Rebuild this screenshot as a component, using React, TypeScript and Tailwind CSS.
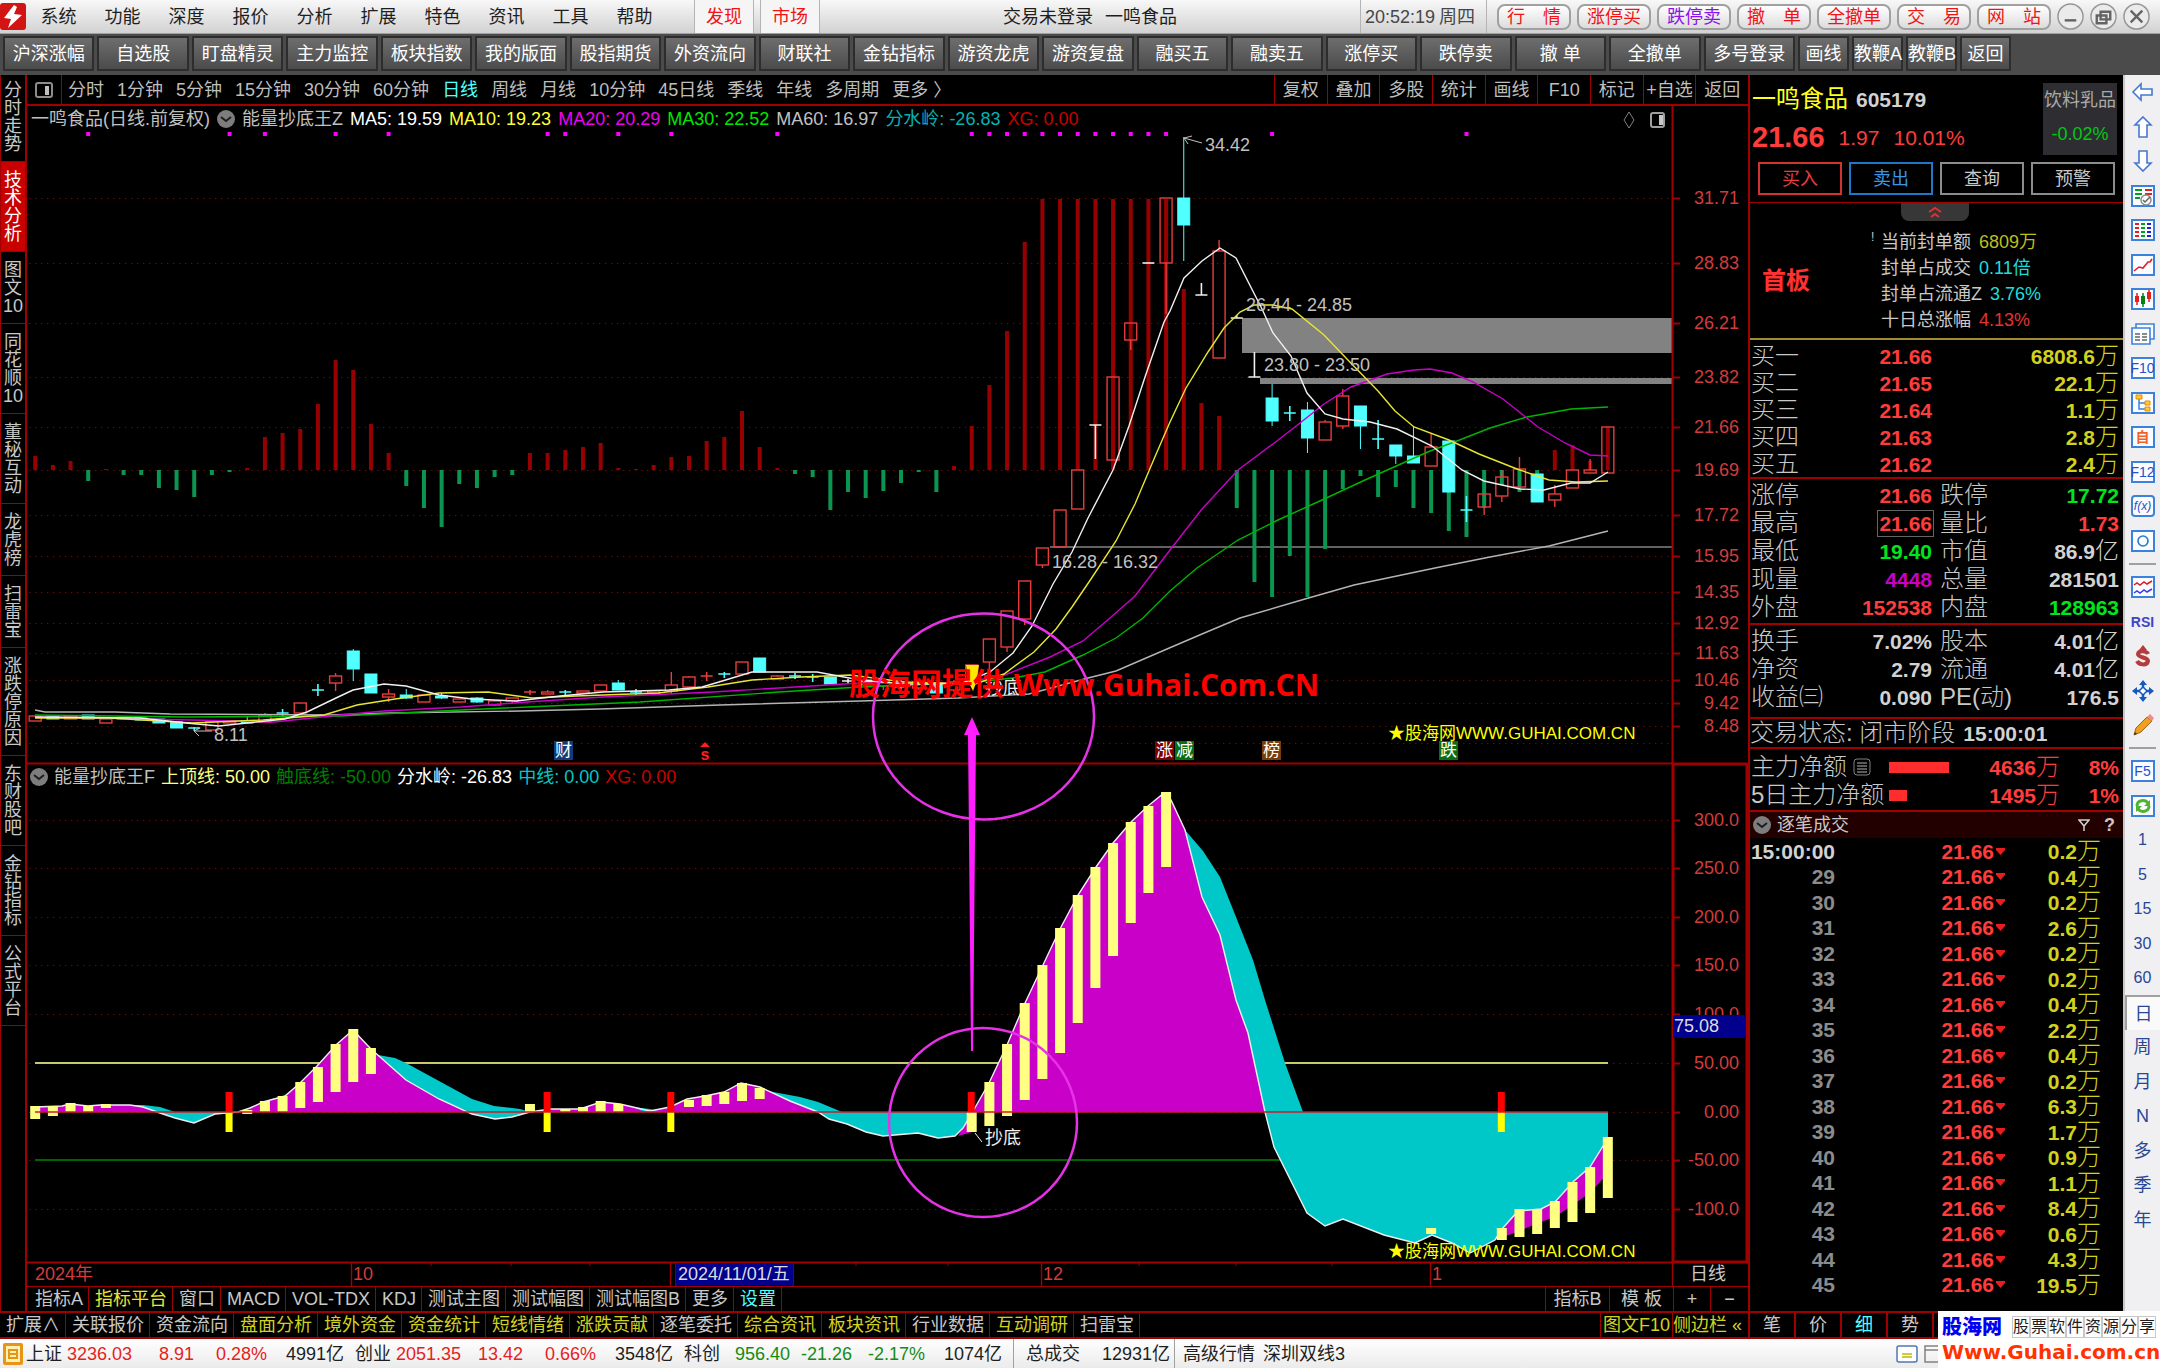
import type { ReactNode } from "react";
import clsx from "clsx";

const MENU = ["系统", "功能", "深度", "报价", "分析", "扩展", "特色", "资讯", "工具", "帮助"];

const PILLS: ReadonlyArray<{ label: string; violet?: boolean }> = [
  { label: "行　情" },
  { label: "涨停买" },
  { label: "跌停卖", violet: true },
  { label: "撤　单" },
  { label: "全撤单" },
  { label: "交　易" },
  { label: "网　站" },
];

const SHORTCUTS = [
  "沪深涨幅", "自选股", "盯盘精灵", "主力监控", "板块指数", "我的版面", "股指期货",
  "外资流向", "财联社", "金钻指标", "游资龙虎", "游资复盘", "融买五", "融卖五",
  "涨停买", "跌停卖", "撤 单", "全撤单", "多号登录",
];
const SHORTCUTS_SMALL = ["画线", "教鞭A", "教鞭B", "返回"];

const SIDE = [
  "分时走势", "技术分析", "图文10", "同花顺10", "董秘互动", "龙虎榜",
  "扫雷宝", "涨跌停原因", "东财股吧", "金钻指标", "公式平台",
];

const PERIODS = [
  "分时", "1分钟", "5分钟", "15分钟", "30分钟", "60分钟", "日线", "周线", "月线",
  "10分钟", "45日线", "季线", "年线", "多周期", "更多 〉",
];
const CHART_TOOLS = ["复权", "叠加", "多股", "统计", "画线", "F10", "标记", "+自选", "返回"];

const INDICATOR_TABS = [
  "指标A", "指标平台", "窗口", "MACD", "VOL-TDX", "KDJ", "测试主图", "测试幅图", "测试幅图B", "更多", "设置",
];

const BOTTOM_TABS: ReadonlyArray<[string, boolean]> = [
  ["扩展∧", false],
  ["关联报价", false],
  ["资金流向", false],
  ["盘面分析", true],
  ["境外资金", true],
  ["资金统计", true],
  ["短线情绪", true],
  ["涨跌贡献", true],
  ["逐笔委托", false],
  ["综合资讯", true],
  ["板块资讯", true],
  ["行业数据", false],
  ["互动调研", true],
  ["扫雷宝", false],
];

const INDEXES = [
  { name: "上证", price: "3236.03", change: "8.91", pct: "0.28%", amount: "4991亿", down: false },
  { name: "创业", price: "2051.35", change: "13.42", pct: "0.66%", amount: "3548亿", down: false },
  { name: "科创", price: "956.40", change: "-21.26", pct: "-2.17%", amount: "1074亿", down: true },
];

/* ---------- chart data, in chart units ---------- */

const barX = (i: number) => 35.2 + i * 17.67;

const ENERGY_BASE = 470;
const ENERGY = [
  14, 5, 9, -11, 1, -5, -5, -18, -20, -27, -5, -2, 2, 33, 37, 41, 66, 110, 100, 46, 17, -16, -38, -57,
  -14, -18, -7, -5, 17, 17, 20, 23, 27, 2, 1, 5, 13, 14, 29, 33, 59, 23, 2, -4, -7, -40, -22, -28, -21,
  -13, -2, -22, 4, 44, 85, 139, 228, 271, 271, 271, 271, 271, 271, 271, 271, 181, 67, 54, -38, -112,
  -127, -86, -127, -79, -19, -6, -27, -17, -38, -43, -61, -67, -38, -15, -22, -7, 20, 25, 9, 43,
];

type Kind = "u" | "d" | "x" | "y" | "w";
// [kind, body top, body bottom, wick top, wick bottom]; x/y/w are crosses in cyan, red and white
const CANDLES: ReadonlyArray<[Kind, number, number, number, number]> = [
  ["u", 716, 721, 716, 721], ["d", 716, 719, 716, 719], ["u", 716, 719, 716, 719], ["d", 715, 719, 715, 719],
  ["u", 719, 723, 719, 723], ["u", 717, 719, 717, 719], ["d", 718, 720, 718, 720], ["d", 719, 723, 719, 723],
  ["d", 722, 728, 722, 728], ["x", 728, 728, 727, 731], ["u", 721, 730, 721, 730], ["u", 721, 723, 720, 723],
  ["d", 721, 723, 717, 723], ["u", 715, 722, 713, 722], ["x", 713, 713, 709, 717], ["u", 703, 713, 703, 713],
  ["x", 690, 690, 684, 696], ["u", 676, 683, 673, 691], ["d", 651, 669, 649, 681], ["d", 674, 693, 674, 693],
  ["u", 694, 697, 689, 702], ["d", 695, 698, 689, 699], ["u", 695, 702, 695, 702], ["d", 696, 698, 693, 699],
  ["u", 699, 702, 699, 702], ["d", 698, 702, 697, 703], ["u", 701, 705, 700, 706], ["u", 698, 701, 698, 703],
  ["y", 692, 692, 690, 695], ["u", 692, 694, 690, 694], ["x", 692, 692, 690, 696], ["u", 691, 693, 691, 693],
  ["u", 685, 691, 685, 691], ["d", 683, 690, 680, 690], ["x", 692, 692, 689, 695], ["u", 691, 693, 691, 693],
  ["u", 685, 691, 672, 694], ["u", 677, 687, 676, 687], ["y", 676, 676, 672, 681], ["x", 674, 674, 672, 678],
  ["u", 662, 674, 662, 674], ["d", 658, 672, 658, 672], ["u", 676, 679, 675, 679], ["x", 676, 676, 673, 679],
  ["x", 677, 677, 674, 682], ["d", 677, 684, 677, 684], ["w", 681, 681, 679, 684], ["d", 680, 685, 678, 688],
  ["u", 681, 686, 680, 690], ["d", 682, 687, 680, 689], ["u", 682, 688, 680, 690], ["d", 683, 693, 680, 694],
  ["u", 682, 690, 680, 692], ["u", 665, 680, 665, 684], ["u", 639, 662, 639, 671], ["u", 611, 647, 611, 652],
  ["u", 581, 619, 581, 625], ["u", 548, 565, 548, 568], ["u", 510, 547, 510, 547], ["u", 470, 509, 470, 509],
  ["w", 425, 425, 425, 459], ["u", 377, 460, 377, 460], ["u", 323, 340, 323, 350], ["w", 263, 263, 263, 263],
  ["u", 198, 263, 198, 314], ["d", 198, 225, 137, 261], ["w", 295, 295, 283, 295], ["u", 251, 358, 240, 358],
  ["w", 318, 318, 315, 318], ["w", 377, 377, 352, 377], ["d", 398, 421, 384, 426], ["x", 413, 413, 406, 421],
  ["d", 410, 438, 402, 453], ["u", 422, 440, 420, 440], ["u", 396, 426, 389, 429], ["d", 406, 426, 406, 449],
  ["x", 439, 439, 420, 449], ["d", 445, 456, 445, 464], ["d", 456, 463, 426, 463], ["u", 447, 466, 433, 466],
  ["d", 441, 492, 441, 492], ["x", 510, 510, 496, 522], ["u", 494, 507, 494, 515], ["u", 477, 496, 470, 502],
  ["u", 469, 487, 457, 489], ["d", 474, 502, 474, 502], ["u", 494, 500, 485, 507], ["u", 470, 488, 470, 488],
  ["u", 470, 473, 459, 473], ["u", 427, 473, 427, 473],
];

const MA_LINES: ReadonlyArray<{ color: string; points: string }> = [
  {
    color: "#b4b4b4",
    points:
      "35,710 45,712 115,712 170,714 330,715 390,713 520,711 600,709 720,705 860,701 958,698 1029,694 1088,678 1116,671 1167,649 1202,634 1240,618 1305,599 1354,585 1435,568 1490,557 1549,546 1608,531",
  },
  {
    color: "#00b400",
    points:
      "35,715 186,717 340,716 461,710 527,707 640,702 779,692 860,687 940,684 985,681 1013,678 1045,672 1083,655 1116,638 1143,618 1170,591 1197,568 1238,540 1278,520 1322,500 1365,480 1403,463 1430,451 1457,441 1490,428 1527,417 1571,409 1608,407",
  },
  {
    color: "#c800c8",
    points:
      "35,717 192,720 274,722 340,715 384,711 461,707 527,702 603,697 713,692 779,688 860,683 960,683 1002,676 1050,657 1083,641 1110,618 1135,596 1170,550 1202,509 1238,470 1273,444 1300,423 1324,404 1351,387 1387,374 1414,370 1430,369 1452,373 1473,382 1503,399 1538,427 1565,443 1590,455 1608,456",
  },
  {
    color: "#e6e632",
    points:
      "35,718 110,718 192,723 263,720 324,715 357,705 395,699 439,693 488,692 532,698 576,696 658,693 708,687 752,680 801,677 850,675 905,682 975,684 1004,674 1034,652 1056,629 1072,607 1091,579 1116,541 1135,504 1154,459 1170,422 1186,388 1208,352 1224,328 1240,312 1254,305 1273,305 1292,309 1324,335 1346,358 1378,391 1395,411 1414,427 1449,440 1479,454 1517,469 1549,480 1576,482 1608,481",
  },
  {
    color: "#f0f0f0",
    points:
      "35,717 140,718 186,723 219,726 247,723 285,719 307,712 336,698 353,690 384,684 406,686 439,695 472,699 516,701 560,696 603,692 669,690 702,687 719,682 752,672 817,672 860,680 905,684 960,684 990,672 1013,653 1032,626 1053,584 1072,552 1088,518 1113,470 1129,426 1145,377 1164,322 1170,311 1184,278 1202,261 1220,248 1236,258 1262,309 1273,333 1291,356 1307,393 1325,414 1343,419 1370,422 1397,429 1432,446 1462,470 1484,481 1520,489 1544,490 1571,483 1590,483 1608,472",
  },
];

const SIGNAL_DOTS = [3, 11, 13, 17, 20, 29, 30, 33, 36, 42, 53, 54, 55, 56, 57, 58, 59, 60, 61, 62, 63, 64, 70, 81];

const PRICE_AXIS: ReadonlyArray<[string, number]> = [
  ["31.71", 198], ["28.83", 263], ["26.21", 323], ["23.82", 377], ["21.66", 427], ["19.69", 470], ["17.72", 515],
  ["15.95", 556], ["14.35", 592], ["12.92", 623], ["11.63", 653], ["10.46", 680], ["9.42", 703], ["8.48", 726],
];
const ENERGY_AXIS: ReadonlyArray<[string, number]> = [
  ["300.0", 820], ["250.0", 868], ["200.0", 917], ["150.0", 965], ["100.0", 1014],
  ["50.00", 1063], ["0.00", 1112], ["-50.00", 1160], ["-100.0", 1209],
];

const WAVE =
  "35,1107 62,1106 70,1104 88,1106 100,1105 130,1105 143,1107 160,1113 175,1118 194,1123 215,1114 238,1112 250,1108 263,1102 285,1096 300,1083 317,1066 337,1044 353,1030 371,1049 406,1080 439,1099 472,1114 495,1119 512,1117 530,1112 550,1109 580,1109 601,1102 620,1104 650,1111 670,1107 687,1099 705,1096 724,1092 741,1083 760,1087 790,1101 818,1112 829,1119 847,1124 866,1132 883,1136 918,1133 938,1138 955,1136 963,1128 972,1113 989,1083 1007,1045 1025,1003 1043,965 1060,929 1078,895 1096,867 1113,843 1131,822 1148,806 1164,793 1171,800 1185,830 1202,897 1220,935 1236,1000 1248,1033 1265,1112 1274,1147 1307,1213 1325,1226 1343,1219 1384,1235 1415,1243 1432,1235 1452,1243 1470,1253 1495,1240 1502,1229 1518,1211 1541,1209 1555,1202 1574,1181 1590,1167 1608,1138";

const CYAN_WEDGES = [
  "130,1105 143,1105 160,1107 175,1112 158,1112 143,1107",
  "378,1055 395,1058 406,1063 439,1081 472,1099 494,1106 520,1109 530,1112 470,1112 439,1099 406,1080",
  "632,1107 650,1109 662,1112 645,1112",
  "768,1091 800,1097 818,1102 842,1112 818,1112 790,1101",
  "1185,830 1203,851 1220,877 1236,917 1253,960 1265,1000 1285,1063 1303,1112 1265,1112 1248,1033 1236,1000 1220,935 1202,897",
];
const MAGENTA_WEDGES = [
  "958,1136 972,1113 972,1132",
  "1495,1240 1502,1229 1518,1211 1541,1209 1555,1202 1574,1181 1590,1167 1608,1138 1608,1173 1590,1193 1555,1217 1538,1223 1517,1232",
];

const LEVELS: ReadonlyArray<[number, number, number]> = [
  [0, 1106, 1119], [1, 1106, 1116], [2, 1103, 1112], [3, 1106, 1112], [4, 1104, 1108], [12, 1110, 1114],
  [13, 1101, 1112], [14, 1096, 1112], [15, 1082, 1108], [16, 1067, 1102], [17, 1044, 1092], [18, 1029, 1082],
  [19, 1048, 1074], [28, 1104, 1112], [30, 1109, 1112], [31, 1107, 1112], [32, 1101, 1112], [33, 1104, 1112],
  [37, 1100, 1107], [38, 1095, 1106], [39, 1092, 1104], [40, 1083, 1101], [41, 1088, 1099], [53, 1112, 1132],
  [54, 1082, 1126], [55, 1044, 1116], [56, 1003, 1100], [57, 965, 1079], [58, 928, 1053], [59, 895, 1023],
  [60, 867, 988], [61, 843, 956], [62, 822, 923], [63, 806, 893], [64, 792, 867], [79, 1228, 1234],
  [83, 1228, 1240], [84, 1209, 1237], [85, 1209, 1234], [86, 1201, 1228], [87, 1182, 1222], [88, 1167, 1213],
  [89, 1137, 1198],
];
const SIGNALS = [11, 29, 36, 53, 83];

const BADGES: ReadonlyArray<[string, number, string]> = [
  ["财", 554, "#0f3c78"],
  ["涨", 1155, "#7d0000"],
  ["减", 1175, "#0a6e14"],
  ["榜", 1262, "#7a3c0a"],
  ["跌", 1439, "#0a6e14"],
];

function Candle({ i }: { i: number }) {
  const [kind, top, bottom, high, low] = CANDLES[i];
  const x = barX(i);
  if (kind === "u") {
    return (
      <g stroke="#e63c3c" strokeWidth="1.4" fill="none">
        <rect x={x - 6} y={top} width="12" height={Math.max(bottom - top, 2)} />
        <path d={`M${x} ${high}V${top}M${x} ${bottom}V${low}`} />
      </g>
    );
  }
  if (kind === "d") {
    return (
      <g fill="#50ffff" stroke="#50ffff">
        <path d={`M${x} ${high}V${low}`} />
        <rect x={x - 6} y={top} width="12" height={bottom - top} />
      </g>
    );
  }
  const color = kind === "x" ? "#50ffff" : kind === "y" ? "#e63c3c" : "#f0f0f0";
  return <path d={`M${x - 6} ${top}h12M${x} ${high}V${low}`} stroke={color} strokeWidth="1.6" />;
}

function Chart() {
  return (
    <svg viewBox="27 106 1721 1180" className="block h-auto w-full" fontSize="18" role="img" aria-label="一鸣食品 日线">
      <defs>
        <clipPath id="above">
          <rect x="27" y="766" width="1645" height="346" />
        </clipPath>
        <clipPath id="below">
          <rect x="27" y="1112" width="1645" height="150" />
        </clipPath>
      </defs>

      <g stroke="#780000" strokeWidth="1" strokeDasharray="1.5 4.5">
        {[...PRICE_AXIS, ["", 743] as const, ...ENERGY_AXIS].map(([, y]) => (
          <path key={y} d={`M29 ${y + 0.5}H1672`} />
        ))}
      </g>

      {/* gap zones */}
      <rect x="1242" y="318" width="430" height="35" fill="#828282" />
      <rect x="1260" y="378" width="412" height="6" fill="#828282" />
      <path d="M1050 547H1672" stroke="#828282" strokeWidth="1.6" />

      {ENERGY.map((v, i) => (
        <rect
          key={i}
          x={barX(i) - 2}
          y={v > 0 ? ENERGY_BASE - v : ENERGY_BASE}
          width="4"
          height={Math.abs(v)}
          fill={v > 0 ? "#960000" : "#0a9650"}
        />
      ))}
      {CANDLES.map((_, i) => (
        <Candle key={i} i={i} />
      ))}
      {MA_LINES.map((line) => (
        <polyline key={line.color} points={line.points} fill="none" stroke={line.color} strokeWidth="1.4" />
      ))}
      {SIGNAL_DOTS.map((i) => (
        <rect key={i} x={barX(i) - 2} y="132" width="4" height="4" fill="#ff00ff" />
      ))}

      <g fill="#c0c0c0" dominantBaseline="central">
        <text x="1205" y="145">34.42</text>
        <text x="1246" y="305">26.44 - 24.85</text>
        <text x="1264" y="365">23.80 - 23.50</text>
        <text x="1052" y="562">16.28 - 16.32</text>
        <text x="214" y="735">8.11</text>
        <path d="M1184 138L1202 143M1184 138l8 -2M1184 138l4 6M194 731h18M194 731l6 -3M194 731l5 5" stroke="#c0c0c0" fill="none" />
      </g>
      <path d="M966 665h13l-3 18l-3 8l-4 -8z" fill="#ffe600" />
      <text x="985" y="688" fill="#f0f0f0" dominantBaseline="central">抄底</text>

      {BADGES.map(([label, x, color]) => (
        <g key={label}>
          <rect x={x} y="741" width="19" height="19" fill={color} />
          <text x={x + 9.5} y="750" fontSize="17" fill="#fff" textAnchor="middle" dominantBaseline="central">
            {label}
          </text>
        </g>
      ))}
      <path d="M700 747h10l-5 -5z" fill="#ff1e1e" />
      <text x="705" y="754" fontSize="16" fontWeight="bold" fill="#ff1e1e" textAnchor="middle" dominantBaseline="central">s</text>
      <path d="M1629 112l5 8l-5 8l-5 -8z" fill="none" stroke="#828282" />
      <rect x="1651" y="113" width="13" height="14" rx="2" fill="none" stroke="#a0a0a0" strokeWidth="2" />
      <rect x="1659" y="115" width="4" height="10" fill="#c8c8c8" />

      {/* energy panel */}
      <path d="M35 1063H1608" stroke="#c8c86e" strokeWidth="2" />
      <path d="M35 1160H1608" stroke="#006400" strokeWidth="2" />
      <polygon points={`35,1112 ${WAVE} 1608,1112`} fill="#c800c8" clipPath="url(#above)" />
      <polygon points={`35,1112 ${WAVE} 1608,1112`} fill="#00c8c8" clipPath="url(#below)" />
      {CYAN_WEDGES.map((points) => (
        <polygon key={points} points={points} fill="#00c8c8" />
      ))}
      {MAGENTA_WEDGES.map((points) => (
        <polygon key={points} points={points} fill="#c800c8" />
      ))}
      <polyline points={WAVE} fill="none" stroke="#f0f0f0" strokeWidth="1.4" />
      {SIGNALS.map((i) => (
        <g key={i}>
          <rect x={barX(i) - 4} y="1092" width="7" height="20" fill="#ff0000" />
          <rect x={barX(i) - 4} y="1112" width="7" height="20" fill="#ffff00" />
        </g>
      ))}
      {LEVELS.map(([i, top, bottom]) => (
        <rect key={i} x={barX(i) - 5} y={top} width="10" height={bottom - top} fill="#ffff82" />
      ))}
      <path d="M35 1112H1608" stroke="#c81e28" strokeWidth="1.6" />
      <path d="M975 1133l7 9" stroke="#f0f0f0" />
      <text x="985" y="1138" fill="#f0f0f0" dominantBaseline="central">抄底</text>

      <g fill="#ffff00" fontSize="17" dominantBaseline="central">
        <text x="1388" y="733">★股海网WWW.GUHAI.COM.CN</text>
        <text x="1388" y="1251">★股海网WWW.GUHAI.COM.CN</text>
      </g>

      {/* frames and axis */}
      <g fill="none" stroke="#a00000">
        <path d="M1672.5 106V763M27 763.5H1672M27 1262.5H1672" strokeWidth="2" />
        <path d="M1673 764H1747V1262H1673z" strokeWidth="3" />
        <path d="M351.5 1262V1286M670.5 1262V1286M676 1262V1286M793 1262V1286M1041.5 1262V1286M1430.5 1262V1286M1672.5 1262V1286" strokeWidth="1.4" />
        <path d="M431 1262v4M511 1262v4M590 1262v4M856 1262v4M948 1262v4M1139 1262v4M1236 1262v4M1332 1262v4" />
        {[...PRICE_AXIS, ...ENERGY_AXIS].map(([label, y]) => (
          <path key={label} d={`M1672 ${y + 0.5}h8`} strokeWidth="2" />
        ))}
      </g>
      <g fill="#d23c3c" dominantBaseline="central">
        {[...PRICE_AXIS, ...ENERGY_AXIS].map(([label, y]) => (
          <text key={label} x="1739" y={y} textAnchor="end">
            {label}
          </text>
        ))}
        <text x="35" y="1274">2024年</text>
        <text x="353" y="1274">10</text>
        <text x="1043" y="1274">12</text>
        <text x="1432" y="1274">1</text>
      </g>
      <rect x="1673" y="1015" width="73" height="23" fill="#00008c" />
      <text x="1674" y="1026" fill="#dcdcdc" dominantBaseline="central">75.08</text>
      <rect x="676" y="1263" width="117" height="22" fill="#00008c" />
      <text x="678" y="1274" fill="#dcdcdc" dominantBaseline="central">2024/11/01/五</text>
      <text x="1708" y="1274" fill="#c8c8c8" textAnchor="middle" dominantBaseline="central">日线</text>

      {/* drawn annotations */}
      <g fill="none" stroke="#e632e6" strokeWidth="2.5">
        <ellipse cx="983.5" cy="716.5" rx="110.5" ry="103" />
        <ellipse cx="983" cy="1122.5" rx="94" ry="94.5" />
      </g>
      <path d="M972 717l8 18h-4l-3 316h-2l-3 -316h-4z" fill="#ff1eff" />
      <g fill="#ff0000" fontWeight="bold" dominantBaseline="central">
        <text x="849" y="684" fontSize="31">股海网提供</text>
        <text x="1014" y="684" fontSize="30" fontFamily="Open Sans, Noto Sans, sans-serif">Www.Guhai.Com.CN</text>
      </g>
    </svg>
  );
}

function Collapse() {
  return (
    <svg viewBox="0 0 18 18" className="size-[18px] shrink-0" aria-hidden>
      <circle cx="9" cy="9" r="9" fill="#7d7d7d" />
      <path d="M4 7l5 4l5 -4" fill="none" stroke="#1e1e1e" strokeWidth="2" />
    </svg>
  );
}

function TopBar() {
  return (
    <header className="flex h-[34px] items-stretch border-b border-[#a0a0a0] bg-linear-to-b from-[#f8f8f8] to-[#d2d2d2] text-lg text-[#1e1e1e]">
      <svg viewBox="0 0 26 27" className="h-[27px] w-[26px] self-center" aria-hidden>
        <rect width="26" height="27" rx="3" fill="#d21414" />
        <path d="M14 2L4 15l7 1l-3 9l14 -13l-8 -1l3 -7z" fill="#fff" />
      </svg>
      <nav className="flex">
        {MENU.map((label) => (
          <button key={label} type="button" className="w-16 pl-px text-center">
            {label}
          </button>
        ))}
      </nav>
      <div className="ml-7 flex gap-1.5">
        <button type="button" className="w-[60px] border-x border-[#b4b4b4] bg-[#f5f5f5] text-[#f01414]">发现</button>
        <button type="button" className="w-[60px] border-x border-[#b4b4b4] bg-[#f5f5f5] text-[#f01414]">市场</button>
      </div>
      <p className="flex grow items-center justify-center gap-3">
        <span>交易未登录</span>
        <span>一鸣食品</span>
      </p>
      <p className="flex w-[127px] items-center gap-1 border-x border-[#b4b4b4] pl-1 text-[#464646]">
        20:52:19 <span>周四</span>
      </p>
      <div className="flex items-center gap-1.5 pl-2.5">
        {PILLS.map(({ label, violet }) => (
          <button
            key={label}
            type="button"
            className={clsx(
              "h-[26px] w-[74px] rounded-lg border-2 border-[#a0a0a0] bg-linear-to-b from-white to-[#dcdcdc] leading-none whitespace-nowrap",
              violet ? "text-[#8c14e6]" : "text-[#f01414]",
            )}
          >
            {label}
          </button>
        ))}
      </div>
      <div className="flex items-center gap-1.5 pr-2.5 pl-1.5">
        {["M8 18h12", "M11 9h10v8h-10zM7 13h10v8h-10z", "M8 8l12 12M20 8l-12 12"].map((d) => (
          <button key={d} type="button" aria-label="窗口">
            <svg viewBox="0 0 28 28" className="size-[27px]">
              <circle cx="14" cy="14" r="13" fill="#ebebeb" stroke="#969696" strokeWidth="1.5" />
              <path d={d} fill="none" stroke="#646464" strokeWidth="2.5" />
            </svg>
          </button>
        ))}
      </div>
    </header>
  );
}

function ShortcutBar() {
  const cls =
    "h-[35px] border-2 border-[#2d2d2d] bg-linear-to-b from-[#6e6e6e] to-[#4b4b4b] text-center whitespace-nowrap";
  return (
    <div className="flex h-[41px] items-start gap-[3px] bg-[#4b4b4b] pt-0.5 pr-[149px] pl-[3px] text-lg leading-none text-white">
      <div className="grid min-w-0 grow grid-cols-19 gap-[3px]">
        {SHORTCUTS.map((label) => (
          <button key={label} type="button" className={cls}>
            {label}
          </button>
        ))}
      </div>
      {SHORTCUTS_SMALL.map((label) => (
        <button key={label} type="button" className={clsx(cls, "w-[51px]")}>
          {label}
        </button>
      ))}
    </div>
  );
}

function SideBar() {
  return (
    <nav className="flex w-[27px] shrink-0 flex-col border-r-2 border-l border-[#a00000]">
      {SIDE.map((label, i) => (
        <button
          key={label}
          type="button"
          className={clsx(
            "border-b border-[#a00000] px-px pb-2 text-center text-lg leading-[18px] break-all",
            i === 0 ? "pt-1.5" : "pt-[9px]",
            i === 1 ? "bg-[#c80000] text-white" : "text-[#c8c8c8]",
          )}
        >
          {label}
        </button>
      ))}
    </nav>
  );
}

function PeriodBar() {
  return (
    <div className="flex h-[31px] items-stretch border-b-2 border-[#a00000] text-lg leading-none text-[#bebebe]">
      <button type="button" aria-label="面板" className="flex w-[35px] items-center justify-center border-r border-[#a00000]">
        <svg viewBox="0 0 18 16" className="h-4 w-[18px]">
          <rect x="1" y="1" width="16" height="14" rx="2" fill="none" stroke="#8c8c8c" strokeWidth="2" />
          <rect x="10" y="4" width="4" height="9" fill="#bebebe" />
        </svg>
      </button>
      <div className="flex grow gap-[13px] pl-1.5">
        {PERIODS.map((label) => (
          <button key={label} type="button" className={clsx("whitespace-nowrap", label === "日线" && "text-[#50ffff]")}>
            {label}
          </button>
        ))}
      </div>
      <div className="grid w-[474px] shrink-0 grid-cols-9">
        {CHART_TOOLS.map((label) => (
          <button key={label} type="button" className="border-l border-[#a00000] text-center whitespace-nowrap">
            {label}
          </button>
        ))}
      </div>
    </div>
  );
}

function ChartArea() {
  return (
    <div className="relative">
      <Chart />
      <p className="absolute top-0 left-1 flex h-[26px] items-center gap-[7px] text-lg leading-none whitespace-nowrap text-[#c0c0c0]">
        <span>一鸣食品(日线.前复权)</span>
        <Collapse />
        <span>能量抄底王Z</span>
        <span className="text-white">MA5: 19.59</span>
        <span className="text-[#ffff32]">MA10: 19.23</span>
        <span className="text-[#f000f0]">MA20: 20.29</span>
        <span className="text-[#00e600]">MA30: 22.52</span>
        <span>MA60: 16.97</span>
        <span className="text-[#00b4b4]">分水岭: -26.83</span>
        <span className="text-[#c80000]">XG: 0.00</span>
      </p>
      <p className="absolute top-[56%] left-[3px] flex h-5 items-center gap-[6px] text-lg leading-none whitespace-nowrap text-[#c0c0c0]">
        <Collapse />
        <span>能量抄底王F</span>
        <span className="text-[#ffff82]">上顶线: 50.00</span>
        <span className="text-[#007d00]">触底线: -50.00</span>
        <span className="text-white">分水岭: -26.83</span>
        <span className="text-[#00c8c8]">中线: 0.00</span>
        <span className="text-[#c80000]">XG: 0.00</span>
      </p>
    </div>
  );
}

function IndicatorTabs() {
  return (
    <div className="flex h-[25px] items-stretch border-t border-[#a00000] pl-0.5 text-lg leading-none text-[#c8c8c8]">
      {INDICATOR_TABS.map((label) => (
        <button
          key={label}
          type="button"
          className={clsx(
            "border-r border-[#a00000] pr-[5px] pl-1.5 whitespace-nowrap",
            label === "指标平台" && "text-[#e6e632]",
            label === "设置" && "text-[#50ffff]",
          )}
        >
          {label}
        </button>
      ))}
      <div className="ml-auto flex *:border-l *:border-[#a00000]">
        <button type="button" className="w-16">指标B</button>
        <button type="button" className="w-16">模 板</button>
        <button type="button" className="w-[37px]">+</button>
        <button type="button" className="w-[38px]">−</button>
      </div>
    </div>
  );
}

function BottomTabs() {
  return (
    <div className="flex h-7 items-stretch border-y-2 border-[#a00000] text-lg leading-none">
      {BOTTOM_TABS.map(([label, hot]) => (
        <button
          key={label}
          type="button"
          className={clsx(
            "border-r border-[#a00000] pr-[5px] pl-1.5 whitespace-nowrap",
            hot ? "text-[#d2d21e]" : "text-[#c8c8c8]",
          )}
        >
          {label}
        </button>
      ))}
      <div className="ml-auto flex text-[#d2d21e] *:border-l *:border-[#a00000]">
        <button type="button" className="w-[72px] whitespace-nowrap">图文F10</button>
        <button type="button" className="flex w-[76px] items-center whitespace-nowrap">侧边栏 «</button>
      </div>
    </div>
  );
}

const BIDS = [
  ["买一", "21.66", "6808.6"],
  ["买二", "21.65", "22.1"],
  ["买三", "21.64", "1.1"],
  ["买四", "21.63", "2.8"],
  ["买五", "21.62", "2.4"],
];

type Stat = [string, string, string, string, string, string];
const STATS: Stat[] = [
  ["涨停", "21.66", "text-[#ff3c3c]", "跌停", "17.72", "text-[#00e61e]"],
  ["最高", "21.66", "text-[#ff3c3c]", "量比", "1.73", "text-[#ff3c3c]"],
  ["最低", "19.40", "text-[#00e61e]", "市值", "86.9亿", "text-[#d2d2d2]"],
  ["现量", "4448", "text-[#c800c8]", "总量", "281501", "text-[#d2d2d2]"],
  ["外盘", "152538", "text-[#ff3c3c]", "内盘", "128963", "text-[#00e61e]"],
];
const STATS_MORE: Stat[] = [
  ["换手", "7.02%", "text-[#d2d2d2]", "股本", "4.01亿", "text-[#d2d2d2]"],
  ["净资", "2.79", "text-[#d2d2d2]", "流通", "4.01亿", "text-[#d2d2d2]"],
  ["收益㈢", "0.090", "text-[#d2d2d2]", "PE(动)", "176.5", "text-[#d2d2d2]"],
];

const TICKS: ReadonlyArray<[string, string]> = [
  ["15:00:00", "0.2"], ["29", "0.4"], ["30", "0.2"], ["31", "2.6"], ["32", "0.2"], ["33", "0.2"],
  ["34", "0.4"], ["35", "2.2"], ["36", "0.4"], ["37", "0.2"], ["38", "6.3"], ["39", "1.7"],
  ["40", "0.9"], ["41", "1.1"], ["42", "8.4"], ["43", "0.6"], ["44", "4.3"], ["45", "19.5"],
];

/* digits are bold, the CJK unit after them stays light */
function Num({ value, className }: { value: string; className?: string }) {
  const unit = value.match(/[万亿]$/)?.[0] ?? "";
  return (
    <span className={clsx("text-[21px] leading-none font-bold", className)}>
      {unit ? value.slice(0, -1) : value}
      {unit && <span className="text-2xl leading-none font-light">{unit}</span>}
    </span>
  );
}

function StatTable({ rows }: { rows: Stat[] }) {
  return (
    <table className="w-full table-fixed">
      <tbody>
        {rows.map(([l1, v1, c1, l2, v2, c2]) => (
          <tr key={l1} className="h-[28px] text-2xl leading-none whitespace-nowrap">
            <th className="w-[84px] pl-px text-left font-light">{l1}</th>
            <td className="w-[98px] text-right">
              <Num value={v1} className={clsx(c1, l1 === "最高" && "outline outline-offset-1 outline-[#646464]")} />
            </td>
            <th className="w-[88px] pl-2 text-left font-light">{l2}</th>
            <td className="pr-1 text-right">
              <Num value={v2} className={c2} />
            </td>
          </tr>
        ))}
      </tbody>
    </table>
  );
}

function QuotePanel() {
  const action = "h-[33px] border-2";
  return (
    <aside className="flex w-[375px] shrink-0 flex-col border-l-2 border-[#a00000] text-[#c8c8c8]">
      <div className="flex h-[82px] justify-between pt-2 pr-[6px] pl-0.5">
        <div className="flex flex-col gap-1">
          <h1 className="flex h-8 items-center gap-2 text-2xl leading-none text-[#ffff1e]">
            一鸣食品 <span className="text-[21px] font-bold text-[#d2d2d2]">605179</span>
          </h1>
          <p className="flex h-9 items-center gap-3.5 text-[21px] leading-none text-[#ff3c3c]">
            <strong className="text-[29px]">21.66</strong>
            <span>1.97</span>
            <span>10.01%</span>
          </p>
        </div>
        <div className="flex h-[72px] w-[74px] flex-col items-center justify-between bg-[#2d2d32] py-2 text-lg leading-none whitespace-nowrap text-[#aaaaaa]">
          饮料乳品
          <span className="pb-1 text-[#00c814]">-0.02%</span>
        </div>
      </div>
      <div className="grid h-[46px] grid-cols-4 gap-[7px] border-b border-[#a00000] px-2 pt-[5px] text-lg leading-none">
        <button type="button" className={clsx(action, "border-[#d23232] text-[#e63c3c]")}>买入</button>
        <button type="button" className={clsx(action, "border-[#1e78c8] text-[#3c96e6]")}>卖出</button>
        <button type="button" className={clsx(action, "border-[#8c8c8c]")}>查询</button>
        <button type="button" className={clsx(action, "border-[#8c8c8c]")}>预警</button>
      </div>

      <section className="flex h-[137px] flex-col border-b-2 border-[#a08c32]">
        <button type="button" aria-label="收起" className="ml-[151px] flex h-[18px] w-[68px] items-center justify-center rounded-b-lg bg-[#373737]">
          <svg viewBox="0 0 16 12" className="h-3 w-4">
            <path d="M2 6l6 -4l6 4M4 11l4 -3l4 3" fill="none" stroke="#dc3232" strokeWidth="2" />
          </svg>
        </button>
        <div className="flex items-center pt-2 pl-3">
          <strong className="w-[119px] text-2xl text-[#ff3232]">首板</strong>
          <dl className="flex flex-col text-lg leading-[26px] *:flex *:gap-2">
            <div className="relative">
              <span className="absolute -left-2.5 text-xs">!</span>
              <dt>当前封单额</dt>
              <dd className="text-[#bebe1e]">6809万</dd>
            </div>
            <div>
              <dt>封单占成交</dt>
              <dd className="text-[#1edcdc]">0.11倍</dd>
            </div>
            <div>
              <dt>封单占流通Z</dt>
              <dd className="text-[#1edcdc]">3.76%</dd>
            </div>
            <div>
              <dt>十日总涨幅</dt>
              <dd className="text-[#e63232]">4.13%</dd>
            </div>
          </dl>
        </div>
      </section>

      <div className="h-[139px] border-b-2 border-[#a00000] pt-0.5">
        <table className="w-full table-fixed">
          <tbody>
            {BIDS.map(([label, price, amount]) => (
              <tr key={label} className="h-[27px] text-2xl leading-none">
                <th className="w-[84px] pl-px text-left font-light">{label}</th>
                <td className="w-[98px] text-right">
                  <Num value={price} className="text-[#ff3c3c]" />
                </td>
                <td className="pr-1 text-right">
                  <Num value={`${amount}万`} className="text-[#d2d21e]" />
                </td>
              </tr>
            ))}
          </tbody>
        </table>
      </div>
      <div className="h-[146px] border-b-2 border-[#a00000] pt-0.5">
        <StatTable rows={STATS} />
      </div>
      <div className="h-[94px] border-b-2 border-[#a00000] pt-0.5">
        <StatTable rows={STATS_MORE} />
      </div>
      <p className="flex h-[30px] items-center gap-2 border-b-2 border-[#a00000] text-2xl leading-none font-light whitespace-nowrap">
        <span>交易状态: 闭市阶段</span>
        <Num value="15:00:01" className="text-[#d2d2d2]" />
      </p>
      <div className="flex h-[63px] flex-col border-b-2 border-[#a00000] pt-1 pr-1 pl-px text-2xl leading-none font-light *:flex *:h-7 *:items-center">
        <div>
          <span className="flex w-[138px] items-center gap-1.5">
            主力净额
            <svg viewBox="0 0 18 18" className="size-[18px]" aria-hidden>
              <rect x="1" y="1" width="16" height="16" rx="3" fill="none" stroke="#828282" />
              <path d="M4 5h10M4 8h10M4 11h10M4 14h10" stroke="#b4b4b4" />
            </svg>
          </span>
          <span className="h-[11px] w-[60px] bg-[#ff2d2d]" />
          <Num value="4636万" className="ml-auto text-[#ff3c3c]" />
          <Num value="8%" className="w-[59px] text-right text-[#ff3c3c]" />
        </div>
        <div>
          <span className="w-[138px] whitespace-nowrap">5日主力净额</span>
          <span className="h-[11px] w-[18px] bg-[#ff2d2d]" />
          <Num value="1495万" className="ml-auto text-[#ff3c3c]" />
          <Num value="1%" className="w-[59px] text-right text-[#ff3c3c]" />
        </div>
      </div>
      <div className="flex h-[26px] items-center gap-1.5 bg-[#230000] pr-2 pl-[3px] text-lg leading-none">
        <Collapse />
        <h2>逐笔成交</h2>
        <svg viewBox="0 0 12 12" className="ml-auto size-3" aria-hidden>
          <path d="M1 1h10l-5 6zM6 6v6" fill="none" stroke="#d2d2d2" strokeWidth="1.5" />
        </svg>
        <button type="button" className="pl-2 font-bold">?</button>
      </div>
      <table className="w-full table-fixed">
        <tbody>
          {TICKS.map(([time, amount], i) => (
            <tr key={time} className="text-[21px] leading-none odd:h-[26px] even:h-[25px]">
              <td className="w-[85px] text-right">
                <Num value={time} className={i === 0 ? "text-[#d2d2d2]" : "text-[#8c8c8c]"} />
              </td>
              <td className="w-[170px] text-right">
                <span className="inline-flex items-center gap-0.5">
                  <Num value="21.66" className="text-[#ff3c3c]" />
                  <svg viewBox="0 0 9 7" className="h-[7px] w-[9px]" aria-hidden>
                    <path d="M0 0h9v2l-4.500 5l-4.500 -5z" fill="#e61e1e" />
                  </svg>
                </span>
              </td>
              <td className="pr-[22px] text-right">
                <Num value={`${amount}万`} className="text-[#d2d21e]" />
              </td>
            </tr>
          ))}
        </tbody>
      </table>
      <div className="mt-auto flex h-7 items-stretch border-y-2 border-[#a00000] text-lg leading-none">
        {["笔", "价", "细", "势"].map((label) => (
          <button
            key={label}
            type="button"
            className={clsx("w-[46px] border-r-2 border-[#a00000]", label === "细" && "text-[#50ffff]")}
          >
            {label}
          </button>
        ))}
      </div>
    </aside>
  );
}

function BoxIcon({ children, rx = 0 }: { children: ReactNode; rx?: number }) {
  return (
    <svg viewBox="0 0 24 22" className="h-[22px] w-6" fill="none">
      <rect x="1" y="1" width="22" height="20" rx={rx} fill="#fafcff" stroke="#3c82dc" strokeWidth="2" />
      {children}
    </svg>
  );
}

function BoxLabel({ children, className }: { children: ReactNode; className?: string }) {
  return (
    <span
      className={clsx(
        "flex h-[22px] w-6 items-center justify-center border-2 border-[#3c82dc] bg-[#fafcff] text-sm leading-none",
        className,
      )}
    >
      {children}
    </span>
  );
}

function ArrowIcon({ d }: { d: string }) {
  return (
    <svg viewBox="0 0 24 24" className="size-6">
      <path d={d} fill="#fff" stroke="#4678d2" strokeWidth="1.6" />
    </svg>
  );
}

const TOOLS_TOP: ReadonlyArray<[string, ReactNode]> = [
  ["后退", <ArrowIcon d="M2 12l8 -8v5h11v6h-11v5z" />],
  ["上翻", <ArrowIcon d="M12 2l8 8h-4v12h-8v-12h-4z" />],
  ["下翻", <ArrowIcon d="M12 22l8 -8h-4v-12h-8v12h-4z" />],
  [
    "自选设置",
    <BoxIcon>
      <path d="M4 5h7M4 9h7M4 13h5" stroke="#00a01e" strokeWidth="2" />
      <path d="M14 5h7M14 9h7" stroke="#e61e1e" strokeWidth="2" />
      <circle cx="15" cy="15" r="5" stroke="#8c8c8c" strokeWidth="1.5" />
      <path d="M12 15l2 2l5 -5" stroke="#646464" strokeWidth="1.5" />
    </BoxIcon>,
  ],
  [
    "报价表",
    <BoxIcon>
      <path d="M4 5h4M4 9h4M4 13h4M4 17h4" stroke="#e61e1e" strokeWidth="2" />
      <path d="M10 5h4M10 9h4M10 13h4M10 17h4" stroke="#00a01e" strokeWidth="2" />
      <path d="M16 5h4M16 9h4M16 13h4M16 17h4" stroke="#1e1edc" strokeWidth="2" />
    </BoxIcon>,
  ],
  [
    "分时图",
    <BoxIcon>
      <path d="M3 17l5 -4l4 1l5 -6h2l2 -3" stroke="#e61e1e" strokeWidth="1.6" />
    </BoxIcon>,
  ],
  [
    "K线图",
    <BoxIcon>
      <path d="M6 5v12M18 2v12" stroke="#e61e1e" strokeWidth="1.5" />
      <path d="M12 5v14" stroke="#008214" strokeWidth="1.5" />
      <path d="M6 8v6M18 4v7" stroke="#e61e1e" strokeWidth="4" />
      <path d="M12 8v8" stroke="#008214" strokeWidth="4" />
    </BoxIcon>,
  ],
  [
    "多窗口",
    <svg viewBox="0 0 24 22" className="h-[22px] w-6" fill="#fafcff">
      <path d="M5 1h18v15h-18z" stroke="#3c82dc" strokeWidth="1.6" />
      <path d="M1 5h18v16h-18z" stroke="#3c82dc" strokeWidth="1.6" />
      <path d="M4 11h5M11 11h5M4 14h5M11 14h5M4 17h5M11 17h5" stroke="#646464" strokeWidth="1.4" />
    </svg>,
  ],
  ["基本资料", <BoxLabel className="text-[#2850c8]">F10</BoxLabel>],
  [
    "板块树",
    <BoxIcon>
      <path d="M8 6v11h6M8 11h6" stroke="#3c82dc" strokeWidth="1.5" />
      <path d="M5 3h6v4h-6zM14 9h5v4h-5zM14 15h5v4h-5z" fill="#ffc83c" stroke="#e68c00" />
    </BoxIcon>,
  ],
  ["自选", <BoxLabel className="font-bold text-[#f06428]">自</BoxLabel>],
  ["成交明细", <BoxLabel className="text-[#2850c8]">F12</BoxLabel>],
  ["公式", <BoxLabel className="rounded border-[#1e8c8c] text-xs text-[#2850c8] italic">f(x)</BoxLabel>],
  [
    "圆形",
    <BoxIcon>
      <circle cx="12" cy="11" r="5" stroke="#2878c8" strokeWidth="1.6" />
    </BoxIcon>,
  ],
];

const TOOLS_MID: ReadonlyArray<[string, ReactNode]> = [
  [
    "波形",
    <BoxIcon>
      <path d="M3 9l3 -2l3 2l4 -3l3 2l5 -3" stroke="#dc1e1e" strokeWidth="1.5" />
      <path d="M3 17l3 -2l3 2l4 -3l3 2l5 -3" stroke="#3c3ce6" strokeWidth="1.5" />
    </BoxIcon>,
  ],
  ["RSI", <span className="text-sm font-bold text-[#3c46c8]">RSI</span>],
  [
    "财富",
    <svg viewBox="0 0 18 24" className="h-6 w-[18px]">
      <path d="M9 1l4 5h-8z" fill="#b43c3c" />
      <path d="M14 10c-1 -3 -9 -4 -10 0c0 4 10 3 10 7c-1 5 -9 4 -11 0" fill="none" stroke="#b43c3c" strokeWidth="4" />
    </svg>,
  ],
  [
    "移动",
    <svg viewBox="0 0 24 24" className="size-6" fill="#145abe">
      <path d="M12 1l4 5h-8zM12 23l4 -5h-8zM1 12l5 -4v8zM23 12l-5 -4v8z" />
      <path d="M12 5v14M5 12h14" stroke="#145abe" strokeWidth="2.5" />
      <path d="M12 8l4 4l-4 4l-4 -4z" fill="#fff" stroke="#145abe" strokeWidth="1.5" />
    </svg>,
  ],
  [
    "画线",
    <svg viewBox="0 0 24 24" className="size-6">
      <path d="M3 22l2 -7l11 -11l5 4l-11 11z" fill="#f0a01e" stroke="#a0641e" />
      <path d="M16 4l3 -3l4 4l-2 3z" fill="#f08c8c" />
      <path d="M3 22l1 -3l2 2z" fill="#323232" />
    </svg>,
  ],
];

const TOOLS_LOW: ReadonlyArray<[string, ReactNode]> = [
  ["F5", <BoxLabel className="text-[#2850c8]">F5</BoxLabel>],
  [
    "刷新",
    <BoxIcon>
      <path d="M6 11c0 -6 8 -7 11 -3M18 11c0 6 -8 7 -11 3" stroke="#50b432" strokeWidth="3" />
      <path d="M19 5v6h-6zM5 17v-6h6z" fill="#50b432" />
    </BoxIcon>,
  ],
  ...["1", "5", "15", "30", "60", "日", "周", "月", "N", "多", "季", "年"].map((t) => [t, t] as [string, string]),
];

function ToolGroup({ tools }: { tools: ReadonlyArray<[string, ReactNode]> }) {
  return (
    <div className="flex flex-col">
      {tools.map(([label, icon]) => (
        <button
          key={label}
          type="button"
          aria-label={label}
          className={clsx(
            "flex items-center justify-center leading-none odd:h-[34px] even:h-[35px]",
            /^\d/.test(label) ? "text-base" : "text-lg",
            label === "日" && "border-t-2 border-l-2 border-[#a0a0a0] bg-[#fafafa]",
          )}
        >
          {icon}
        </button>
      ))}
    </div>
  );
}

function ToolBar() {
  return (
    <nav className="w-[37px] shrink-0 border-l-2 border-[#c8c8c8] bg-[#f0f0f2] text-[#284696]">
      <ToolGroup tools={TOOLS_TOP} />
      <hr className="mx-1 my-[5px] border-t-2 border-[#a0a0a0]" />
      <ToolGroup tools={TOOLS_MID} />
      <hr className="mx-1 my-[5px] border-t-2 border-[#a0a0a0]" />
      <ToolGroup tools={TOOLS_LOW} />
    </nav>
  );
}

function StatusBar() {
  return (
    <footer className="flex h-[29px] items-stretch bg-linear-to-b from-white to-[#ebebeb] text-lg leading-none whitespace-nowrap text-[#1e1e1e] *:flex *:items-center">
      <div className="w-[26px] pl-[3px]">
        <svg viewBox="0 0 20 22" className="h-[22px] w-5" aria-hidden>
          <rect width="20" height="22" rx="2" fill="#e69614" />
          <rect x="3" y="3" width="14" height="16" fill="#fff0b4" />
          <path d="M6 7h8v8h-8zM6 11h8" fill="none" stroke="#e69614" strokeWidth="2" />
        </svg>
      </div>
      {INDEXES.map((row) => {
        const tone = row.down ? "text-[#148c14]" : "text-[#e61e1e]";
        return (
          <div key={row.name} className="pr-[11px] text-right">
            <span className="w-[38px] text-left">{row.name}</span>
            <span className={clsx("w-[68px]", tone)}>{row.price}</span>
            <span className={clsx("w-[62px]", tone)}>{row.change}</span>
            <span className={clsx("w-[73px]", tone)}>{row.pct}</span>
            <span className="w-[77px]">{row.amount}</span>
          </div>
        );
      })}
      <div className="w-[162px] justify-between border-x border-[#a0a0a0] pr-1 pl-3">
        <span>总成交</span>
        <span>12931亿</span>
      </div>
      <div className="gap-2 pl-2">
        <span>高级行情</span>
        <span>深圳双线3</span>
      </div>
      <div className="mr-[222px] ml-auto gap-1.5">
        <svg viewBox="0 0 22 18" className="h-[18px] w-[22px]" aria-hidden>
          <rect x="1" y="1" width="20" height="16" rx="2" fill="#fff" stroke="#5078b4" strokeWidth="1.5" />
          <path d="M6 9h10M6 12h10" stroke="#d2c83c" strokeWidth="2" />
        </svg>
        <svg viewBox="0 0 14 18" className="h-[18px] w-3.5" aria-hidden>
          <path d="M14 1h-13v16h13M1 5h13" fill="none" stroke="#828282" strokeWidth="1.5" />
        </svg>
      </div>
    </footer>
  );
}

function SiteMark() {
  return (
    <div className="absolute right-0 bottom-0 flex h-[57px] w-[222px] flex-col justify-between bg-white px-1 py-1 leading-none whitespace-nowrap">
      <p className="flex items-center justify-between">
        <strong className="text-xl leading-6 font-black text-[#0000f0]">股海网</strong>
        <span className="flex text-base leading-5 text-[#1e1e1e]">
          {[..."股票软件资源分享"].map((char) => (
            <span key={char} className="w-[18px] border border-[#c8c8c8] text-center">
              {char}
            </span>
          ))}
        </span>
      </p>
      <a href="#guhai" className="font-[DejaVu_Sans] text-xl leading-6 font-bold text-[#ff3200]">
        Www.Guhai.com.cn
      </a>
    </div>
  );
}

export default function App() {
  return (
    <div className="relative flex min-h-screen flex-col bg-black font-['Liberation_Sans','Noto_Sans_CJK_SC',sans-serif]">
      <TopBar />
      <ShortcutBar />
      <main className="flex grow items-stretch">
        <div className="flex min-w-0 grow flex-col">
          <div className="flex grow">
            <SideBar />
            <div className="min-w-0 grow">
              <PeriodBar />
              <ChartArea />
              <IndicatorTabs />
            </div>
          </div>
          <BottomTabs />
        </div>
        <QuotePanel />
        <ToolBar />
      </main>
      <StatusBar />
      <SiteMark />
    </div>
  );
}
